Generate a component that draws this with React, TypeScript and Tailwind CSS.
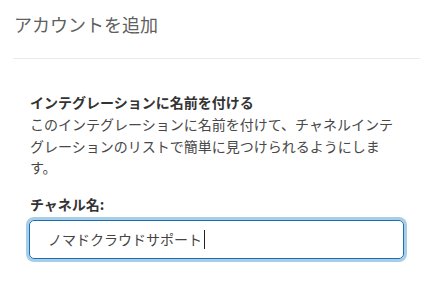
import React from "react";

export default function App() {
  const font = { fontFamily: '"Noto Sans CJK JP", "Noto Sans", sans-serif' };
  return (
    <div className="w-[443px] h-[295px] bg-white overflow-hidden" style={font}>
      <div className="ml-[13px] w-[407px]">
        <div className="pt-[12px] pb-[21px] border-b border-[#ebebeb]">
          <div className="pl-[1px] text-[18px] leading-[25px] text-[#5f5f5f]">アカウントを追加</div>
        </div>
        <div className="px-[16px] pt-[33px]">
          <div className="pl-[1px] text-[14px] leading-[20px] font-bold text-[#333333]">
            インテグレーションに名前を付ける
          </div>
          <p className="mt-[2px] pl-[1px] text-[14px] leading-[21.5px] text-[#484848]">
            このインテグレーションに名前を付けて、チャネルインテグレーションのリストで簡単に見つけられるようにします。
          </p>
          <div className="mt-[15px] pl-[1px] text-[14px] leading-[20px] font-bold text-[#333333]">
            チャネル名:
          </div>
          <div className="mt-[6px] h-[39px] rounded-[5px] border-[1.5px] border-[#1a6fb5] ring-[3px] ring-[#a8cde6] flex items-center pl-[18px]">
            <span className="text-[14px] leading-[20px] text-[#444444]">ノマドクラウドサポート</span>
            <span className="ml-[2px] w-[1px] h-[19px] bg-[#222222]" />
          </div>
        </div>
      </div>
    </div>
  );
}
